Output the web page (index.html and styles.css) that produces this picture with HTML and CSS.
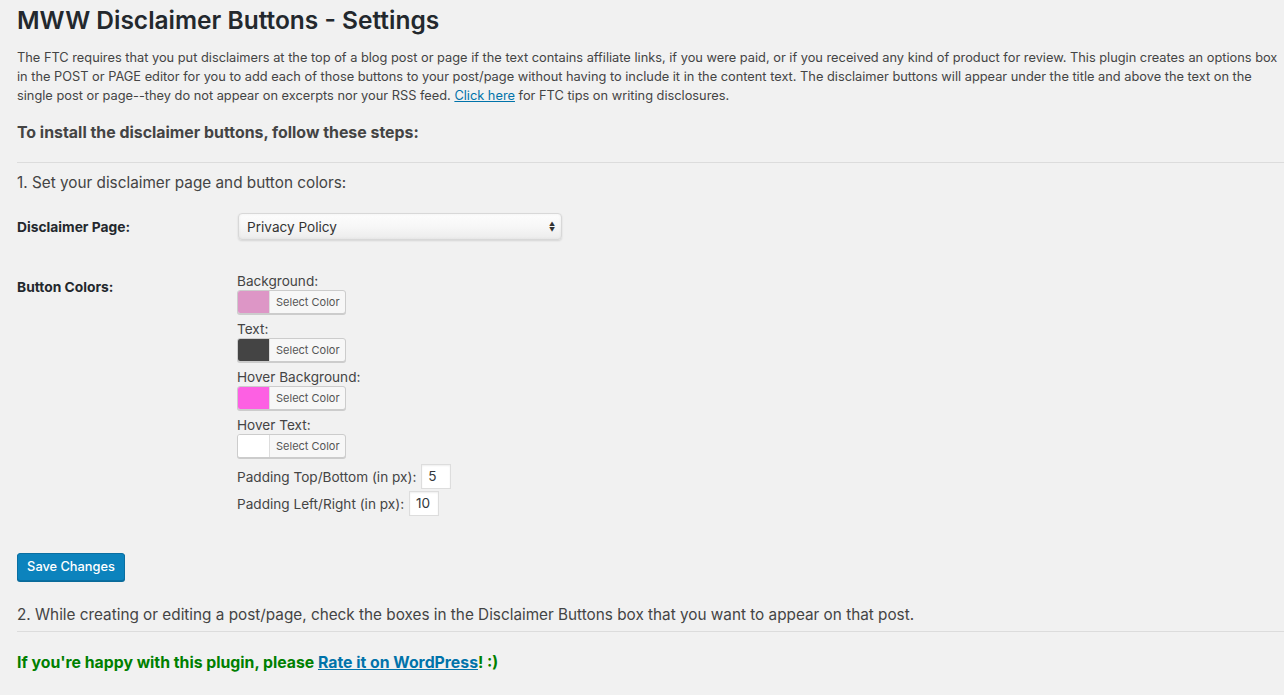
FILE: index.html
```html
<!DOCTYPE html>
<html>
<head>
<meta charset="utf-8">
<link rel="stylesheet" href="styles.css">
</head>
<body>
<div class="wrap">
  <h1 class="title">MWW Disclaimer Buttons - Settings</h1>
  <p class="intro">The FTC requires that you put disclaimers at the top of a blog post or page if the text contains affiliate links, if you were paid, or if you received any kind of product for review. This plugin creates an options box in the POST or PAGE editor for you to add each of those buttons to your post/page without having to include it in the content text. The disclaimer buttons will appear under the title and above the text on the single post or page--they do not appear on excerpts nor your RSS feed. <a href="#" class="link">Click here</a> for FTC tips on writing disclosures.</p>
  <h3 class="steps">To install the disclaimer buttons, follow these steps:</h3>
  <hr class="rule">
  <p class="step">1. Set your disclaimer page and button colors:</p>

  <div class="form">
    <div class="row row-select">
      <div class="label">Disclaimer Page:</div>
      <div class="field field-select">
        <div class="select"><span>Privacy Policy</span><span class="arrows">▲<br>▼</span></div>
      </div>
    </div>
    <div class="row row-colors">
      <div class="label">Button Colors:</div>
      <div class="field colors">
        <div class="clabel">Background:</div>
        <div class="cbtn"><span class="swatch sw-pink"></span><span class="ctext">Select Color</span></div>
        <div class="clabel">Text:</div>
        <div class="cbtn"><span class="swatch sw-dark"></span><span class="ctext">Select Color</span></div>
        <div class="clabel">Hover Background:</div>
        <div class="cbtn"><span class="swatch sw-hot"></span><span class="ctext">Select Color</span></div>
        <div class="clabel">Hover Text:</div>
        <div class="cbtn"><span class="swatch sw-white"></span><span class="ctext">Select Color</span></div>
        <div class="pad pad-first">Padding Top/Bottom (in px): <span class="num">5</span></div>
        <div class="pad">Padding Left/Right (in px): <span class="num">10</span></div>
      </div>
    </div>
  </div>

  <div class="save">Save Changes</div>
  <p class="step step2">2. While creating or editing a post/page, check the boxes in the Disclaimer Buttons box that you want to appear on that post.</p>
  <hr class="rule rule2">
  <p class="happy">If you're happy with this plugin, please <a href="#" class="link">Rate it on WordPress</a>! :)</p>
</div>
</body>
</html>
```

FILE: styles.css
```css
html, body {
  margin: 0;
  padding: 0;
  background: #f1f1f1;
}
body {
  font-family: Inter, Roboto, "Liberation Sans", sans-serif;
  color: #444;
  width: 1284px;
  height: 695px;
  overflow: hidden;
}
.wrap {
  padding: 6px 0 0 17px;
}
.title {
  margin: 0;
  font-size: 24.5px;
  line-height: 29px;
  font-weight: 600;
  color: #23282d;
}
.intro {
  margin: 13px 0 0 0;
  font-size: 12.8px;
  line-height: 19px;
  color: #444;
}
.link {
  color: #0073aa;
  text-decoration: underline;
}
.steps {
  margin: 18px 0 0;
  font-size: 15.9px;
  line-height: 20px;
  font-weight: 700;
  color: #444;
}
.rule {
  margin: 19px 0 0;
  border: 0;
  border-top: 1px solid #dcdcdc;
  height: 0;
}
.step {
  margin: 9px 0 0;
  font-size: 15.3px;
  line-height: 21px;
  color: #444;
}
.form {
  margin-top: 20px;
}
.row {
  display: flex;
}
.label {
  width: 220px;
  flex: none;
  font-size: 13.8px;
  font-weight: 700;
  color: #23282d;
}
.row-select .label {
  padding-top: 6px;
}
.field-select {
  margin-left: 1px;
}
.select {
  width: 324px;
  height: 27px;
  box-sizing: border-box;
  border: 1px solid #d8d8d8;
  border-radius: 4px;
  background: linear-gradient(#fdfdfd, #f7f7f7 50%, #ececec);
  box-shadow: 0 1px 2px rgba(0,0,0,0.12), inset 0 0 3px rgba(0,0,0,0.06);
  display: flex;
  align-items: center;
  justify-content: space-between;
  padding: 0 6px 0 8px;
  font-size: 13.6px;
  color: #333;
}
.arrows {
  font-size: 6px;
  line-height: 6px;
  color: #333;
}
.row-colors {
  margin-top: 39px;
}
.colors {
  display: flex;
  flex-direction: column;
  align-items: flex-start;
}
.clabel {
  font-size: 13.6px;
  line-height: 17px;
  color: #444;
  margin-top: 7px;
}
.clabel:first-child {
  margin-top: -6px;
}
.cbtn {
  display: flex;
  height: 24px;
  box-sizing: border-box;
  border: 1px solid #ccc;
  border-radius: 3px;
  background: #f7f7f7;
  box-shadow: 0 1px 0 #ccc;
  overflow: hidden;
}
.swatch {
  width: 31px;
  border-right: 1px solid #ddd;
}
.sw-pink { background: #dd96c6; }
.sw-dark { background: #444444; }
.sw-hot { background: #fd60e3; }
.sw-white { background: #ffffff; }
.ctext {
  font-size: 11px;
  line-height: 22px;
  padding: 0 5px 0 6px;
  color: #555;
}
.pad {
  font-size: 13.6px;
  color: #444;
  display: flex;
  align-items: center;
  height: 25px;
  margin-top: 2px;
}
.pad-first {
  margin-top: 6px;
}
.num {
  display: inline-block;
  box-sizing: border-box;
  height: 25px;
  width: 30px;
  border: 1px solid #ddd;
  background: #fff;
  margin-left: 5px;
  padding: 0 6px;
  line-height: 23px;
  font-size: 13.6px;
  color: #32373c;
  box-shadow: inset 0 1px 2px rgba(0,0,0,0.07);
}
.save {
  margin-top: 37px;
  width: 108px;
  height: 28px;
  box-sizing: border-box;
  background: #0c83bd;
  border: 1px solid #0a6fa2;
  border-radius: 3px;
  box-shadow: 0 1px 0 #0a6a99;
  color: #fff;
  font-size: 12.8px;
  font-weight: 500;
  line-height: 26px;
  text-align: center;
}
.step2 {
  margin-top: 23px;
}
.rule2 {
  margin-top: 6px;
}
.happy {
  margin: 21px 0 0;
  font-size: 15.8px;
  font-weight: 700;
  color: #008000;
}
```
